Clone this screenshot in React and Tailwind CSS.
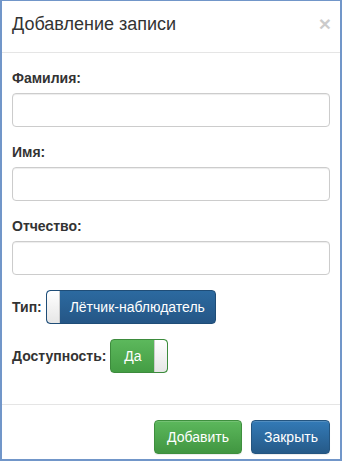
import React, { useState } from 'react';

const font = { fontFamily: '"Liberation Sans", Arial, sans-serif' };

const Field = ({ label }) => (
  <div className="mb-[15px]">
    <label className="block h-5 mb-[5px] text-sm font-bold leading-5 text-[#333]">{label}</label>
    <input
      type="text"
      className="block w-full h-[34px] px-3 text-sm text-[#555] bg-white border border-[#ccc] rounded shadow-[inset_0_1px_1px_rgba(0,0,0,0.075)] outline-none"
    />
  </div>
);

const App = () => {
  const [pilot, setPilot] = useState(true);
  const [available, setAvailable] = useState(true);

  return (
    <div style={font} className="w-[342px] h-[461px] bg-white border-x-2 border-b-2 border-t border-[#7196c9] flex flex-col overflow-hidden">
      {/* header */}
      <div className="h-[52px] border-b border-[#e5e5e5] px-[10px] pt-[12px] flex justify-between items-start">
        <h4 className="text-[18px] leading-[22px] text-[#333]">Добавление записи</h4>
        <button className="text-[21px] leading-[21px] font-bold text-black opacity-20 mr-[-1px]">×</button>
      </div>

      {/* body */}
      <div className="px-[10px] pt-[15px] pb-[15px] h-[351px]">
        <Field label="Фамилия:" />
        <Field label="Имя:" />
        <Field label="Отчество:" />

        <div className="mb-[15px] flex items-center h-[34px]">
          <span className="text-sm font-bold text-[#333] mr-[4px]">Тип:</span>
          <button
            onClick={() => setPilot(!pilot)}
            className="h-[34px] w-[170px] flex items-stretch rounded border border-[#1f4d77] bg-gradient-to-b from-[#2c6aa0] to-[#255686] overflow-hidden"
          >
            <span className="w-[13px] bg-gradient-to-b from-white to-[#e6e6e6] border-r border-[#ccc] rounded-l"></span>
            <span className="flex-1 flex items-center justify-center text-sm text-white">Лётчик-наблюдатель</span>
          </button>
        </div>

        <div className="flex items-center h-[34px]">
          <span className="text-sm font-bold text-[#333] mr-[4px]">Доступность:</span>
          <button
            onClick={() => setAvailable(!available)}
            className="h-[34px] w-[58px] flex items-stretch rounded border border-[#3d8b3d] bg-gradient-to-b from-[#5cb85c] to-[#449d44] overflow-hidden"
          >
            <span className="flex-1 flex items-center justify-center text-sm text-white">Да</span>
            <span className="w-[13px] bg-gradient-to-b from-white to-[#e6e6e6] border-l border-[#ccc] rounded-r"></span>
          </button>
        </div>
      </div>

      {/* footer */}
      <div className="border-t border-[#e5e5e5] pt-[15px] px-[10px] flex justify-end gap-[9px]">
        <button className="h-[34px] px-3 text-sm text-white rounded border border-[#3e8f3e] bg-gradient-to-b from-[#5cb85c] to-[#419641] shadow-[inset_0_1px_0_rgba(255,255,255,0.15),0_1px_1px_rgba(0,0,0,0.075)] w-[88px]">
          Добавить
        </button>
        <button className="h-[34px] px-3 text-sm text-white rounded border border-[#245580] bg-gradient-to-b from-[#337ab7] to-[#265a88] shadow-[inset_0_1px_0_rgba(255,255,255,0.15),0_1px_1px_rgba(0,0,0,0.075)] w-[79px]">
          Закрыть
        </button>
      </div>
    </div>
  );
};

export default App;
